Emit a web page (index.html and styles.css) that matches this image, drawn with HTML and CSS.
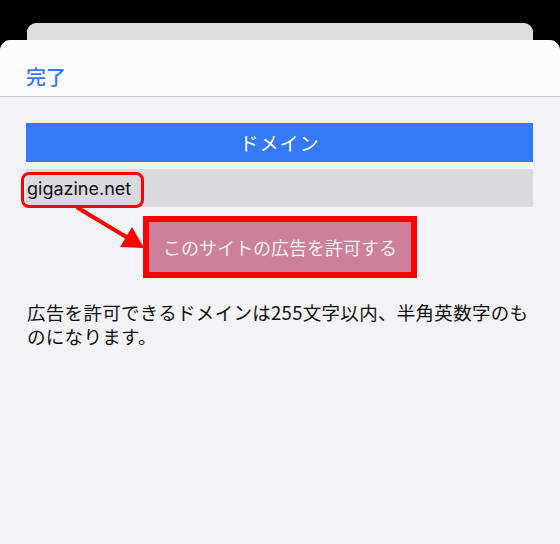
FILE: index.html
```html
<!DOCTYPE html>
<html lang="ja">
<head>
    <meta charset="UTF-8">
    <meta name="viewport" content="width=device-width, initial-scale=1.0">
    <title>ドメイン</title>
    <link rel="stylesheet" href="styles.css">
</head>
<body>
    <div class="back-card"></div>
    <div class="sheet">
        <div class="nav-bar">
            <span class="done-btn">完了</span>
        </div>

        <div class="content">
            <div class="section-title">ドメイン</div>

            <div class="domain-row">
                <span class="domain-text">gigazine.net</span>
                <div class="mark-box"></div>
            </div>

            <div class="allow-wrap">
                <button class="allow-btn">このサイトの広告を許可する</button>
            </div>

            <!-- annotation arrow -->
            <svg class="mark-arrow" width="80" height="50" viewBox="0 0 80 50">
                <line x1="2" y1="1" x2="52" y2="31" stroke="#ff0000" stroke-width="4" stroke-linecap="round"/>
                <polygon points="68,41 44,40 56,20" fill="#ff0000"/>
            </svg>

            <p class="note">広告を許可できるドメインは255文字以内、半角英数字のものになります。</p>
        </div>
    </div>
</body>
</html>
```

FILE: styles.css
```css
body {
    margin: 0;
    background: #000;
    font-family: "Noto Sans CJK JP", "Noto Sans", sans-serif;
    height: 544px;
    overflow: hidden;
}

.back-card {
    margin: 23px 27px 0;
    height: 17px;
    background: #dcdcdc;
    border-radius: 9px 9px 0 0;
}

.sheet {
    background: #f2f2f7;
    border-radius: 11px 11px 0 0;
    height: 504px;
    overflow: hidden;
}

.nav-bar {
    height: 57px;
    background: #fcfcfd;
    border-bottom: 1px solid #c9c9cd;
    padding-left: 26px;
    display: flex;
    align-items: center;
    box-sizing: border-box;
}

.done-btn {
    color: #3478f6;
    font-size: 20px;
    font-weight: 500;
    margin-top: 16px;
}

.content {
    position: relative;
    padding: 26px 27px 0 26px;
}

.section-title {
    height: 39px;
    background: #3479f6;
    color: #fff;
    font-size: 19px;
    display: flex;
    align-items: center;
    justify-content: center;
    letter-spacing: 1px;
}

.domain-row {
    position: relative;
    margin-top: 7px;
    height: 38px;
    background: #dadade;
    display: flex;
    align-items: center;
}

.domain-text {
    font-family: Inter, "Noto Sans", sans-serif;
    font-size: 18px;
    color: #111;
    padding-left: 1px;
}

.mark-box {
    position: absolute;
    left: -5px;
    top: 3px;
    width: 117px;
    height: 30px;
    border: 3px solid #ff0000;
    border-radius: 8px;
}

.allow-wrap {
    margin-top: 9px;
    padding-left: 117px;
}

.allow-btn {
    width: 274px;
    height: 62px;
    background: #cc8199;
    border: 6px solid #ff0000;
    color: #fbeef2;
    font-family: inherit;
    font-size: 18px;
    padding: 0;
    display: flex;
    align-items: center;
    justify-content: center;
}

.mark-arrow {
    position: absolute;
    left: 76px;
    top: 110px;
}

.note {
    margin: 22px 0 0 1px;
    font-size: 18.5px;
    line-height: 24px;
    letter-spacing: 0.3px;
    color: #111;
}
```
